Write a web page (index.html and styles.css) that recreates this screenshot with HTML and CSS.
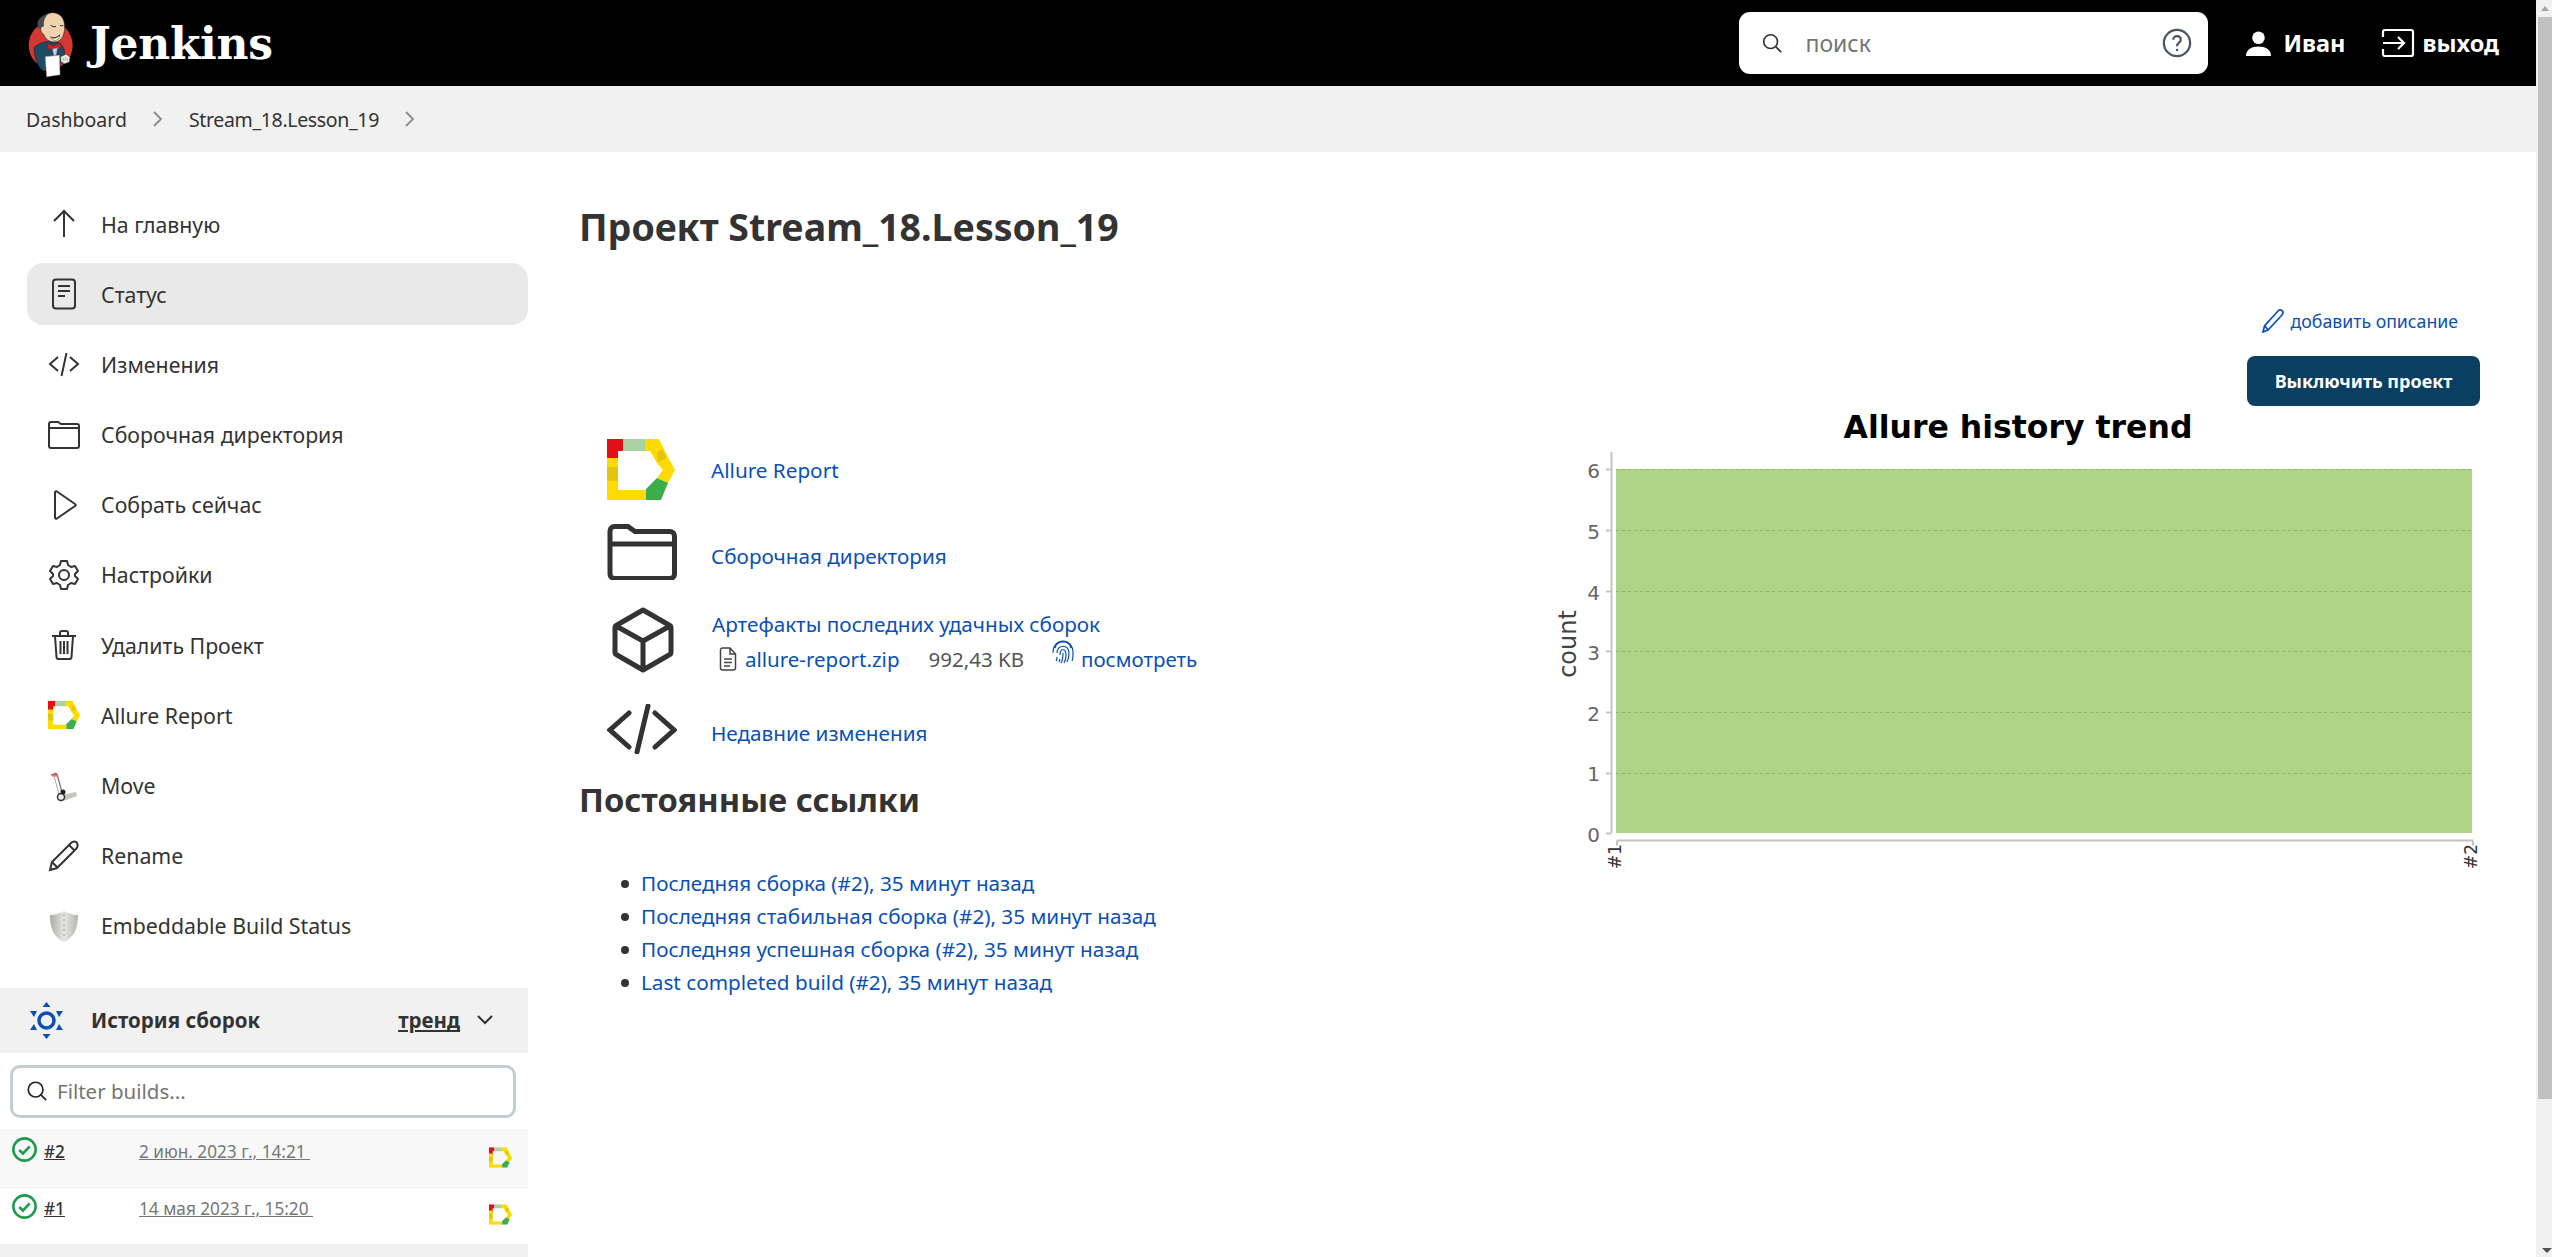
FILE: index.html
```html
<!DOCTYPE html>
<html lang="ru">
<head>
<meta charset="utf-8">
<title>Stream_18.Lesson_19 [Jenkins]</title>
<link rel="stylesheet" href="styles.css">
</head>
<body>
<div class="page">
  <header class="topbar">
    <a class="brand">
      <svg class="brand-icon" viewBox="0 0 210 225">
        <ellipse cx="92" cy="118" rx="66" ry="70" fill="#d33833"/>
        <path d="M42 125 C55 112 75 104 100 108 C115 106 125 112 132 130 C138 150 130 170 118 180 L70 195 C55 185 44 160 42 125Z" fill="#1f4a63" stroke="#16262f" stroke-width="2"/>
        <path d="M62 62 C60 35 78 20 98 20 C122 20 136 40 134 68 C132 92 122 108 104 108 C88 108 76 100 72 86 C66 84 60 72 62 62Z" fill="#efd3ae" stroke="#2c2622" stroke-width="2"/>
        <path d="M62 72 C46 60 50 38 72 28 C76 26 82 24 88 22 C74 32 70 46 72 62 C68 60 64 62 62 72Z" fill="#4a4a4c"/>
        <path d="M92 58 q8 6 16 4 M120 58 q5 3 10 0 M92 94 q14 6 28 -8" stroke="#2c2622" stroke-width="3" fill="none"/>
        <path d="M92 92 q12 12 28 -4 q-2 14 -14 16 q-10 0 -14 -12Z" fill="#fff" stroke="#2c2622" stroke-width="1.500"/>
        <path d="M82 112 L101 120 L122 110 L120 130 L102 125 L86 132Z" fill="#d7211f" stroke="#6a1513" stroke-width="1"/>
        <path d="M97 128 l16 -3 l-4 22 l-8 2z" fill="#c9d0d6" stroke="#4d5b66" stroke-width="1.500"/>
        <path d="M76 152 L118 148 L120 206 L80 212Z" fill="#fff" stroke="#a8a8a8" stroke-width="1.500"/>
        <path d="M122 152 l16 -7 l12 8 l-2 15 l-14 5 l-11 -6z" fill="#f6f1e8" stroke="#3a3a3a" stroke-width="1.500"/>
        <path d="M130 156v10M136 153v12M142 156v9" stroke="#6c6c6c" stroke-width="1.500"/>
      </svg>
      <span class="brand-name">Jenkins</span>
    </a>
    <div class="search">
      <svg class="search-mag" viewBox="0 0 24 24"><circle cx="10.500" cy="10.500" r="7.500"/><path d="M16 16l6 6"/></svg>
      <span class="search-text">поиск</span>
      <svg class="search-help" viewBox="0 0 32 32"><circle cx="16" cy="16" r="14"/><path d="M12 12.500c0-5 8-5 8 0 0 3.500-4 3-4 7"/><circle class="dot" cx="16" cy="23.500" r="1.300"/></svg>
    </div>
    <a class="top-link user">
      <svg class="user-icon" viewBox="0 0 28 28"><circle cx="14" cy="8" r="6.500"/><path d="M1 27c0-7 6-10 13-10s13 3 13 10z"/></svg>
      <span>Иван</span>
    </a>
    <a class="top-link logout">
      <svg class="logout-icon" viewBox="0 0 34 30"><path d="M2 9V4a2 2 0 0 1 2-2h26a2 2 0 0 1 2 2v22a2 2 0 0 1-2 2H4a2 2 0 0 1-2-2v-5"/><path d="M2 15h21M17 9l6 6-6 6"/></svg>
      <span>выход</span>
    </a>
  </header>

  <nav class="crumbs">
    <a class="crumb">Dashboard</a>
    <svg class="chev" viewBox="0 0 12 18"><path d="M2 2l7 7-7 7"/></svg>
    <a class="crumb crumb-job">Stream_18.Lesson_19</a>
    <svg class="chev" viewBox="0 0 12 18"><path d="M2 2l7 7-7 7"/></svg>
  </nav>

  <div class="layout">
    <aside class="side">
      <ul class="tasks">
        <li class="task"><svg class="ti" viewBox="0 0 32 32"><path d="M16 29V4M6 13l10-10 10 10"/></svg><span>На главную</span></li>
        <li class="task active"><svg class="ti" viewBox="0 0 32 32"><rect x="5" y="1.500" width="22" height="29" rx="3"/><path d="M10 8h12M10 13h12M10 18h7"/></svg><span>Статус</span></li>
        <li class="task"><svg class="ti" viewBox="0 0 32 32"><path d="M10 9l-8 7 8 7M22 9l8 7-8 7M18.500 5l-5 23"/></svg><span>Изменения</span></li>
        <li class="task"><svg class="ti" viewBox="0 0 32 32"><path d="M1 8V5a2 2 0 0 1 2-2h7l3 2h16a2 2 0 0 1 2 2v20a2 2 0 0 1-2 2H3a2 2 0 0 1-2-2zM1 9h30"/></svg><span>Сборочная директория</span></li>
        <li class="task"><svg class="ti" viewBox="0 0 32 32"><path d="M7 3.500c0-1 1-1.500 2-1L27 15c1 .6 1 1.500 0 2L9 29.500c-1 .5-2 0-2-1z"/></svg><span>Собрать сейчас</span></li>
        <li class="task"><svg class="ti" viewBox="0 0 32 32"><circle cx="16" cy="16" r="5"/><path d="M13 2h6l1 4 3 2 4-1 3 5-3 3v2l3 3-3 5-4-1-3 2-1 4h-6l-1-4-3-2-4 1-3-5 3-3v-2l-3-3 3-5 4 1 3-2z" stroke-linejoin="round"/></svg><span>Настройки</span></li>
        <li class="task"><svg class="ti" viewBox="0 0 32 32"><path d="M4 7h24M12 7V4a2 2 0 0 1 2-2h4a2 2 0 0 1 2 2v3M7 7l1.500 21a2 2 0 0 0 2 2h11a2 2 0 0 0 2-2L25 7M12.500 12v13M16 12v13M19.500 12v13"/></svg><span>Удалить Проект</span></li>
        <li class="task"><svg class="ti allure" viewBox="0 0 68 61"><use href="#allure"/></svg><span>Allure Report</span></li>
        <li class="task"><svg class="ti plain" viewBox="0 0 32 32"><path d="M3 5h7l-2-2zM4 6h6" fill="#d9534f" stroke="#d9534f" stroke-width="1"/><path d="M9 4l6 22" stroke="#888" stroke-width="1.500"/><path d="M6 6l6 22" stroke="#aaa" stroke-width="1"/><path d="M14 25l14-3 1 4-14 5z" fill="#c4c4c0"/><circle cx="13" cy="27" r="3.500" fill="#eee" stroke="#333" stroke-width="1.500"/><circle cx="15" cy="22" r="2.500" fill="#222"/></svg><span>Move</span></li>
        <li class="task"><svg class="ti" viewBox="0 0 32 32"><path d="M2 30l2-8L23 3c2-2 5-2 6 0s1 4-1 6L9 28zM4 22l6 6M21 5l6 6"/></svg><span>Rename</span></li>
        <li class="task"><svg class="ti plain" viewBox="0 0 32 32"><defs><linearGradient id="sh" x1="0" x2="1" y1="0" y2="0"><stop offset="0" stop-color="#a9aba6"/><stop offset=".5" stop-color="#e6e6e3"/><stop offset="1" stop-color="#b5b6b2"/></linearGradient></defs><path d="M16 1c4 2 8 4 14 4 0 12-3 22-14 27C5 27 2 17 2 5c6 0 10-2 14-4z" fill="url(#sh)"/><path d="M16 4v24" stroke="#bdbdba" stroke-dasharray="2 3"/></svg><span>Embeddable Build Status</span></li>
      </ul>

      <section class="history">
        <div class="history-head">
          <svg class="hist-icon" viewBox="0 0 33 37">
            <circle cx="16.500" cy="18.500" r="7.500" fill="none" stroke="#0a50b5" stroke-width="3.500"/>
            <path d="M16.500 0l4 5h-8zM16.500 37l4-5h-8zM0 9h7l-3 6zM33 9h-7l3 6zM0 28h7l-3-6zM33 28h-7l3-6z" fill="#0a50b5"/>
          </svg>
          <span class="hist-title">История сборок</span>
          <a class="hist-trend">тренд</a>
          <svg class="hist-chev" viewBox="0 0 18 12"><path d="M2 2l7 7 7-7"/></svg>
        </div>
        <div class="filter-wrap">
          <div class="filter">
            <svg class="filter-mag" viewBox="0 0 24 24"><circle cx="10.500" cy="10.500" r="8"/><path d="M16 16l6 6"/></svg>
            <span>Filter builds...</span>
          </div>
        </div>
        <div class="build odd">
          <svg class="check" viewBox="0 0 24 24"><circle cx="12" cy="12" r="10.700"/><path d="M7 12.500l3.500 3.500L17 9"/></svg>
          <a class="build-num">#2</a>
          <a class="build-date">2 июн. 2023 г., 14:21&nbsp;</a>
          <svg class="build-allure" viewBox="0 0 68 61"><use href="#allure"/></svg>
        </div>
        <div class="build">
          <svg class="check" viewBox="0 0 24 24"><circle cx="12" cy="12" r="10.700"/><path d="M7 12.500l3.500 3.500L17 9"/></svg>
          <a class="build-num">#1</a>
          <a class="build-date">14 мая 2023 г., 15:20&nbsp;</a>
          <svg class="build-allure" viewBox="0 0 68 61"><use href="#allure"/></svg>
        </div>
        <div class="history-foot"></div>
      </section>
    </aside>

    <main class="content">
      <h1 class="title">Проект Stream_18.Lesson_19</h1>
      <div class="actions">
        <a class="add-desc">
          <svg class="add-pen" viewBox="0 0 22 24"><path d="M1 23l1.500-6L16 2c1.500-1.500 3.500-1.500 4.500 0s.5 3-1 4.500L6 21zM3 17l3 4"/></svg>
          <span>добавить описание</span>
        </a>
        <button class="disable-btn">Выключить проект</button>
      </div>
      <div class="columns">
        <div class="left">
          <div class="links">
            <div class="link-row r1">
              <svg class="big allure-big" viewBox="0 0 68 61"><use href="#allure"/></svg>
              <a class="link">Allure Report</a>
            </div>
            <div class="link-row r2">
              <svg class="big" viewBox="0 0 70 56"><path d="M3 13V7a4.500 4.500 0 0 1 4.500-4.500H21l7 5h35a4.500 4.500 0 0 1 4.500 4.500v38a4.500 4.500 0 0 1-4.500 4.500H7.500A4.500 4.500 0 0 1 3 50zM3 20h64.500"/></svg>
              <a class="link low">Сборочная директория</a>
            </div>
            <div class="link-row r3">
              <svg class="big cube" viewBox="0 0 62 66"><path d="M31 3l26 15a3 3 0 0 1 2 3v24a3 3 0 0 1-2 3L31 63 5 48a3 3 0 0 1-2-3V21a3 3 0 0 1 2-3zM4 19l27 15 27-15M31 34v29" stroke-linejoin="round"/></svg>
              <div class="art">
                <a class="link">Артефакты последних удачных сборок</a>
                <div class="art-sub">
                  <svg class="file" viewBox="0 0 18 24"><path d="M1.500 3a2 2 0 0 1 2-2H11l5.500 6v14a2 2 0 0 1-2 2h-11a2 2 0 0 1-2-2zM11 1v6h5.500M5 12h8M5 15.500h8M5 19h6"/></svg>
                  <a class="link art-file">allure-report.zip</a>
                  <span class="size">992,43 KB</span>
                  <svg class="finger" viewBox="0 0 22 24"><path d="M3 8c2-8 14-8 16 0M1 13c0-16 20-16 20 0 0 4 0 6-1 8M5 13c0-9 12-9 12 0 0 4-1 7-2 9M8 15c0-7 6-7 6 0 0 3 0 5-2 8M11 13c0 4 0 7-2 10M5 17c0 2 0 3-1 4M8 19l-1 3"/></svg>
                  <a class="link view">посмотреть</a>
                </div>
              </div>
            </div>
            <div class="link-row r4">
              <svg class="big" viewBox="0 0 70 50"><path d="M22 9L3 26l19 17M48 9l19 17-19 17M41 2l-11 46"/></svg>
              <a class="link low">Недавние изменения</a>
            </div>
          </div>
          <h2 class="perma-title">Постоянные ссылки</h2>
          <ul class="perma">
            <li><a class="link">Последняя сборка (#2), 35 минут назад</a></li>
            <li><a class="link">Последняя стабильная сборка (#2), 35 минут назад</a></li>
            <li><a class="link">Последняя успешная сборка (#2), 35 минут назад</a></li>
            <li><a class="link">Last completed build (#2), 35 минут назад</a></li>
          </ul>
        </div>
        <svg class="chart" viewBox="0 0 950 490" width="950" height="490">
          <text class="c-title" x="488" y="39" text-anchor="middle">Allure history trend</text>
          <rect x="86" y="70" width="856" height="364" fill="#aed585"/>
          <g class="c-grid">
            <path d="M86 70.500h856M86 131.500h856M86 192.500h856M86 252.500h856M86 313.500h856M86 374.500h856"/>
          </g>
          <path class="c-axis" d="M81.500 53V434M76 70.500h5M76 131.500h5M76 192.500h5M76 252.500h5M76 313.500h5M76 374.500h5M76 434.500h5M87 441.500H943M87 441.500v5M943 441.500v5"/>
          <g class="c-num">
            <text x="70" y="79">6</text><text x="70" y="140">5</text><text x="70" y="201">4</text><text x="70" y="261">3</text><text x="70" y="322">2</text><text x="70" y="382">1</text><text x="70" y="443">0</text>
          </g>
          <text class="c-count" transform="translate(46 245) rotate(-90)" text-anchor="middle">count</text>
          <text class="c-tick" transform="translate(91 470) rotate(-90)">#1</text>
          <text class="c-tick" transform="translate(947 470) rotate(-90)">#2</text>
        </svg>
      </div>
    </main>
  </div>
</div>
<div class="scrollbar">
  <div class="sb-arrow"></div>
  <div class="sb-thumb"></div>
  <div class="sb-arrow-down"></div>
</div>

<svg class="defs" width="0" height="0">
  <defs>
    <symbol id="allure" viewBox="0 0 68 61">
      <path d="M0 0h16v12H11v14H0z" fill="#e30f14"/>
      <path d="M16 0H38v12H16z" fill="#a9d3a5"/>
      <path d="M38 0h14l9 18-11 6-7-12H38z" fill="#ffdb00"/>
      <path d="M50 13l5-3 6 12-10 4z" fill="#e3c50f"/>
      <path d="M61 18l7 13-7 13-11-5 6-8-6-7z" fill="#ffdb00"/>
      <path d="M0 19h11v32h28v10H0z" fill="#ffdb00"/>
      <path d="M0 28h11v14H0z" fill="#e3c50f"/>
      <path d="M39 50l11-11 11 5-7 17H39z" fill="#3cad4a"/>
    </symbol>
  </defs>
</svg>
</body>
</html>
```
FILE: styles.css
```css
* { box-sizing: border-box; }
html, body { margin: 0; padding: 0; height: 1257px; overflow: hidden; background: #fff; }
body {
  display: flex;
  font-family: "Noto Sans", "Open Sans", sans-serif;
  font-size: 21px;
  color: #333;
}
a { text-decoration: none; color: inherit; }
ul { list-style: none; margin: 0; padding: 0; }
.defs { position: absolute; }
.page { flex: 1; min-width: 0; height: 1257px; display: flex; flex-direction: column; }

/* top bar */
.topbar { height: 86px; background: #000; display: flex; align-items: center; padding: 0 37px 0 20px; color: #fff; flex: none; }
.brand { display: flex; align-items: center; margin-right: auto; }
.brand-icon { width: 70px; height: 75px; }
.brand-name { font-family: "DejaVu Serif", serif; font-weight: 700; font-size: 44px; color: #fff; letter-spacing: -.3px; }
.search { width: 469px; height: 62px; background: #fff; border-radius: 11px; display: flex; align-items: center; padding: 0 16px 0 22px; margin-right: 37px; }
.search-mag { width: 22px; height: 22px; fill: none; stroke: #333; stroke-width: 1.800; flex: none; }
.search-text { margin-left: 22px; color: #757575; font-size: 23px; flex: 1; }
.search-help { width: 30px; height: 30px; fill: none; stroke: #4b5560; stroke-width: 2.400; flex: none; }
.search-help .dot { fill: #4b5560; stroke: none; }
.top-link { display: flex; align-items: center; font-weight: 700; font-size: 23.500px; color: #fff; }
.user-icon { width: 27px; height: 27px; fill: #fff; margin-right: 11px; }
.user { margin-right: 35px; }
.logout-icon { width: 34px; height: 30px; fill: none; stroke: #fff; stroke-width: 2.200; margin-right: 8px; }

/* breadcrumbs */
.crumbs { height: 66px; background: #f1f1f1; display: flex; align-items: center; padding-left: 26px; flex: none; font-size: 19.500px; }
.crumb-job { letter-spacing: -.34px; }
.chev { width: 12px; height: 18px; fill: none; stroke: #8a8a8a; stroke-width: 1.800; margin: 0 25px; }

/* layout */
.layout { flex: 1; display: flex; min-height: 0; }
.side { width: 528px; flex: none; display: flex; flex-direction: column; padding-top: 41px; }
.tasks { padding-left: 27px; display: flex; flex-direction: column; gap: 8.200px; }
.task { height: 62px; display: flex; align-items: center; padding-left: 21px; border-radius: 16px; font-size: 21.300px; }
.task.active { background: #e9e9e9; }
.ti { width: 32px; height: 32px; fill: none; stroke: #333; stroke-width: 2; margin-right: 21px; flex: none; }
.ti.allure, .ti.plain { stroke: none; }
.history { margin-top: 31px; flex: 1; display: flex; flex-direction: column; }
.history-head { height: 65px; background: #f1f1f1; display: flex; align-items: center; padding-left: 30px; font-size: 21px; flex: none; }
.hist-icon { width: 33px; height: 37px; flex: none; }
.hist-title { font-weight: 700; margin-left: 28px; font-size: 20.500px; }
.hist-trend { margin-left: auto; font-weight: 700; font-size: 20.500px; text-decoration: underline; }
.hist-chev { width: 18px; height: 12px; fill: none; stroke: #333; stroke-width: 2; margin: 0 34px 0 16px; }
.filter-wrap { padding: 12px 12px 12px 10px; flex: none; }
.filter { height: 53px; border: 3px solid #c3ced4; border-radius: 10px; display: flex; align-items: center; padding-left: 13px; color: #757575; font-size: 20.500px; }
.filter-mag { width: 22px; height: 22px; fill: none; stroke: #222; stroke-width: 1.800; margin-right: 9px; }
.build { height: 57px; display: flex; align-items: flex-start; border-top: 1px solid #f1f1f1; position: relative; font-size: 17.200px; padding-left: 12px; flex: none; }
.build.odd { background: #f8f8f8; }
.check { width: 25px; height: 25px; fill: none; stroke: #1e9b4f; stroke-width: 2.500; margin-top: 6px; flex: none; }
.build-num { margin-left: 7px; width: 95px; margin-top: 9px; text-decoration: underline; color: #333; font-weight: 500; }
.build-date { margin-top: 9px; color: #777; text-decoration: underline; }
.build-allure { position: absolute; left: 489px; top: 16px; width: 23px; height: 21px; }
.history-foot { flex: 1; background: #f1f1f1; }

/* content */
.content { flex: 1; min-width: 0; position: relative; padding: 0 56px 0 51px; }
.title { margin: 0; padding-top: 51px; font-size: 37.500px; font-weight: 700; line-height: 48px; color: #333; }
.actions { display: flex; flex-direction: column; align-items: flex-end; margin-top: 56px; }
.add-desc { display: flex; align-items: center; color: #0a50b5; font-size: 17.700px; margin-right: 22px; height: 28px; }
.add-pen { width: 22px; height: 24px; fill: none; stroke: #0a50b5; stroke-width: 1.700; margin-right: 7px; }
.disable-btn { margin-top: 21px; width: 233px; height: 50px; border: 0; border-radius: 8px; background: #0b3f61; color: #fff; font: 700 18px "Noto Sans", sans-serif; }
.columns { display: flex; justify-content: space-between; align-items: flex-start; margin-top: -7px; }
.left { flex: 1; }
.link { color: #0a50b5; font-size: 20.700px; }
.low { padding-top: 8px; }
.links { padding-top: 40px; padding-left: 28px; }
.link-row { display: flex; align-items: center; }
.r1 { height: 61px; }
.r2 { margin-top: 24px; height: 56px; }
.r3 { margin-top: 27px; height: 66px; }
.r4 { margin-top: 31px; height: 50px; }
.big { width: 70px; height: 100%; fill: none; stroke: #333; stroke-width: 5; stroke-linecap: round; flex: none; margin-right: 34px; }
.allure-big { width: 68px; stroke: none; margin-right: 36px; }
.cube { width: 62px; margin: 0 38px 0 5px; }
.art { display: flex; flex-direction: column; padding-top: 2px; }
.art-sub { display: flex; align-items: center; margin-top: 7px; padding-left: 7px; }
.file { width: 18px; height: 24px; fill: none; stroke: #444; stroke-width: 1.500; margin-right: 8px; }
.art-file, .view, .size { font-size: 20.500px; }
.size { margin-left: 29px; color: #555; }
.finger { width: 22px; height: 24px; fill: none; stroke: #0a50b5; stroke-width: 1.200; margin: -14px 7px 0 28px; }
.perma-title { margin: 23px 0 0; font-size: 32.700px; font-weight: 700; line-height: 46px; color: #333; }
.perma { margin-top: 44px; padding-left: 43px; }
.perma li { height: 33px; line-height: 33px; padding-left: 19px; color: #333; position: relative; }
.perma li::before { content: ""; position: absolute; left: -1px; top: 13px; width: 8px; height: 8px; border-radius: 50%; background: #333; }
.chart { flex: none; }
.c-title { font: 700 31.500px "DejaVu Sans", sans-serif; fill: #000; }
.c-grid path { stroke: #8fb86a; stroke-width: 1; stroke-dasharray: 3 3; fill: none; }
.c-axis { stroke: #c4c4c4; stroke-width: 2; fill: none; }
.c-num text { font: 20px "DejaVu Sans", sans-serif; fill: #666; text-anchor: end; }
.c-count { font: 24px "DejaVu Sans", sans-serif; fill: #444; }
.c-tick { font: 17px "DejaVu Sans", sans-serif; fill: #333; }

/* scrollbar */
.scrollbar { width: 16px; flex: none; background: #f1f1f1; display: flex; flex-direction: column; align-items: flex-end; height: 1257px; position: relative; }
.sb-arrow { height: 17px; width: 14px; flex: none; position: relative; }
.sb-arrow::before { content: ""; position: absolute; left: 3px; top: 6px; border: 4.500px solid transparent; border-top: 0; border-bottom: 5px solid #a3a3a3; }
.sb-thumb { height: 1082px; width: 14px; background: #c1c1c1; flex: none; }
.sb-arrow-down { margin-top: auto; margin-bottom: 4px; width: 0; height: 0; border: 5px solid transparent; border-bottom: 0; border-top: 5px solid #505050; }
```
